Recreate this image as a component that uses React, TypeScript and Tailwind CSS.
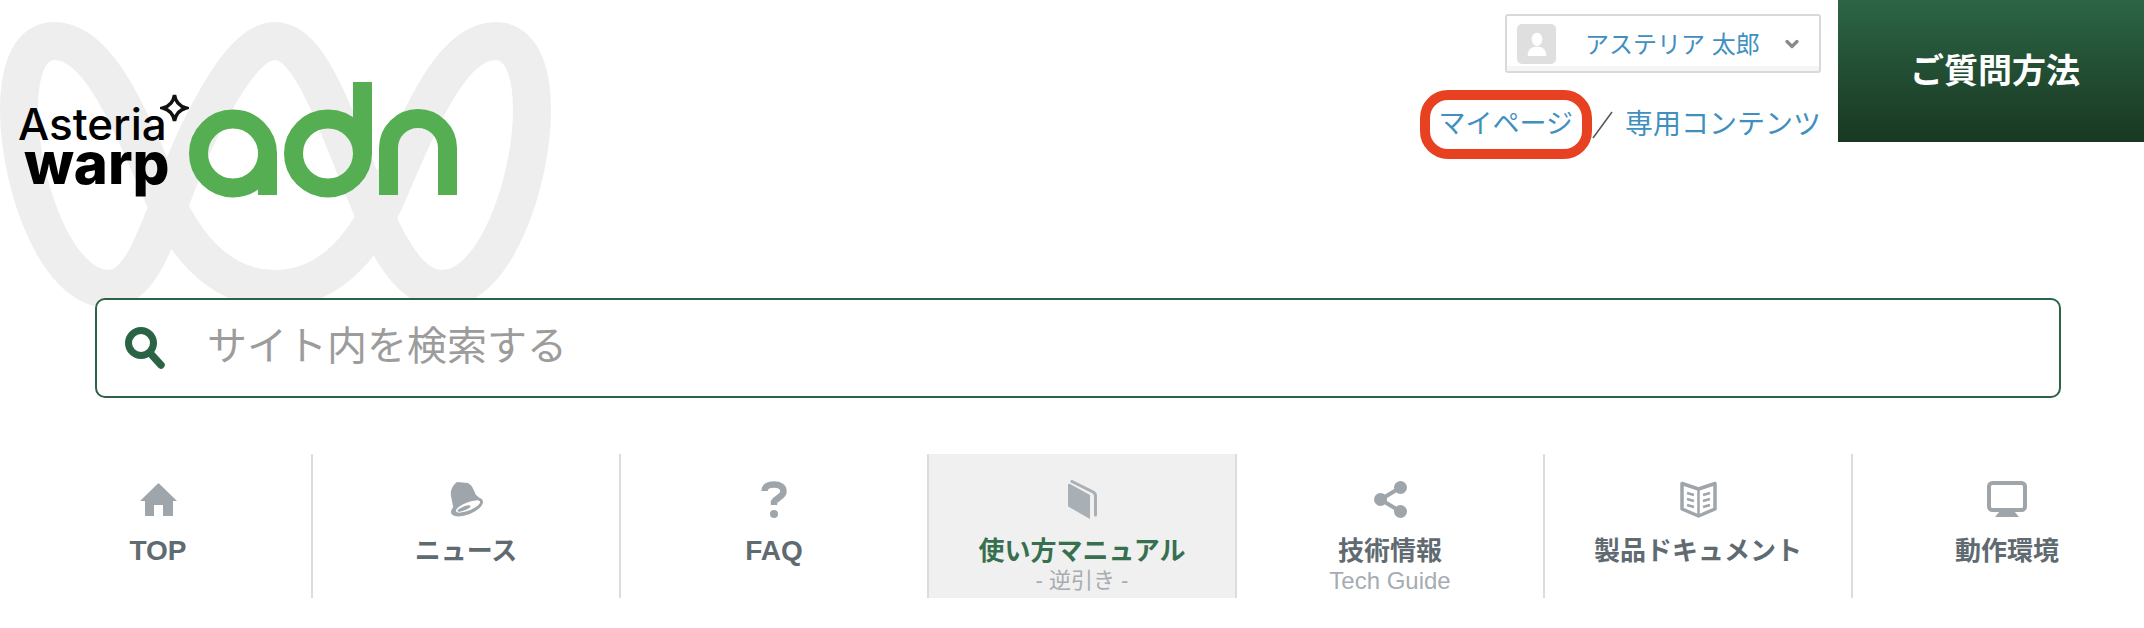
import { ChevronDown } from 'lucide-react';

const fontStack = '"Liberation Sans", "Noto Sans CJK JP", sans-serif';

function HomeIcon() {
  return (
    <svg width="37" height="33" viewBox="0 0 37 33" fill="#9ea5ab">
      <path d="M18.5 0 L37 18 L33 18 L33 33 L23 33 L23 22 L14 22 L14 33 L5 33 L5 18 L0 18 Z" />
    </svg>
  );
}

function BellIcon() {
  return (
    <svg width="33" height="36" viewBox="0 0 33 36" fill="#9ea5ab">
      <path d="M7 1 L18 2 C23 5 24 10 26 14 L32 19 L4 31 C3 25 2 20 1 15 C0 9 3 4 7 1 Z" />
      <ellipse cx="17" cy="26" rx="17" ry="7.5" transform="rotate(-22 17 26)" />
      <ellipse cx="18" cy="25.5" rx="13" ry="4" transform="rotate(-22 18 25.5)" fill="#fff" />
      <ellipse cx="14" cy="27.5" rx="7" ry="2" transform="rotate(-22 14 27.5)" />
    </svg>
  );
}

function QuestionIcon() {
  return (
    <svg width="26" height="37" viewBox="0 0 26 37" fill="none">
      <path d="M3.5 10 C3.5 5.5 7.5 3.5 13 3.5 C19 3.5 22.5 6 22.5 10.5 C22.5 16 15 16.5 13 21 L13 24" stroke="#9ea5ab" strokeWidth="6.5" />
      <circle cx="13" cy="33" r="4" fill="#9ea5ab" />
    </svg>
  );
}

function BookIcon() {
  return (
    <svg width="29" height="39" viewBox="0 0 29 39" fill="#a8afb5">
      <path d="M0 5 Q0 3 2 4 L22 15 V39 L1 27 Q0 26.5 0 25 Z" />
      <path d="M4 1.5 L25 12 Q27.5 13.5 27.5 16 V35" fill="none" stroke="#a8afb5" strokeWidth="3" strokeLinecap="round" />
    </svg>
  );
}

function ShareIcon() {
  return (
    <svg width="33" height="37" viewBox="0 0 33 37" fill="#9ea5ab">
      <circle cx="26.5" cy="6.5" r="6.5" />
      <circle cx="6.5" cy="18.5" r="6.5" />
      <circle cx="26.5" cy="30.5" r="6.5" />
      <path d="M26.5 6.5 L6.5 18.5 L26.5 30.5" stroke="#9ea5ab" strokeWidth="4" fill="none" />
    </svg>
  );
}

function OpenBookIcon() {
  return (
    <svg width="37" height="37" viewBox="0 0 37 37" fill="none" stroke="#9ea5ab">
      <path d="M2 2.5 L18.5 8 L35 2.5 V28 L18.5 35 L2 28 Z" strokeWidth="3.5" strokeLinejoin="round" />
      <path d="M18.5 8 V35" strokeWidth="2.5" />
      <path d="M7 12 L14 14 M7 18 L14 20 M7 24 L14 26 M30 12 L23 14 M30 18 L23 20 M30 24 L23 26" strokeWidth="2.5" />
    </svg>
  );
}

function MonitorIcon() {
  return (
    <svg width="40" height="36" viewBox="0 0 40 36" fill="none">
      <rect x="2" y="2" width="36" height="27" rx="3.5" stroke="#9ea5ab" strokeWidth="4" />
      <path d="M8 36 L13 30 H27 L32 36 Z" fill="#9ea5ab" />
    </svg>
  );
}

const navItems = [
  { label: 'TOP', icon: <HomeIcon />, latin: true },
  { label: 'ニュース', icon: <BellIcon /> },
  { label: 'FAQ', icon: <QuestionIcon />, latin: true },
  { label: '使い方マニュアル', sub: '- 逆引き -', subSize: 'text-[22px]', icon: <BookIcon />, active: true },
  { label: '技術情報', sub: 'Tech Guide', subSize: 'text-[24px]', icon: <ShareIcon /> },
  { label: '製品ドキュメント', icon: <OpenBookIcon /> },
  { label: '動作環境', icon: <MonitorIcon /> },
];

export default function App() {
  return (
    <div className="relative h-[628px] w-[2144px] overflow-hidden bg-white" style={{ fontFamily: fontStack }}>
      {/* watermark ribbon behind the logo */}
      <svg className="absolute left-0 top-0" width="560" height="320" viewBox="0 0 560 320" fill="none" stroke="#eeeeee" strokeWidth="38">
        <path d="M109 289 C55 289 19 180 19 110 C19 65 32 41 54 41 C100 41 130 120 165 200 C195 265 235 289 275 289 C315 289 355 265 385 200 C420 120 450 41 496 41 C518 41 532 65 532 110 C532 180 496 289 442 289 C395 289 370 200 340 130 C320 80 300 41 275 41 C250 41 225 80 200 130 C165 200 150 289 109 289 Z" />
      </svg>

      <div className="relative flex h-[218px] items-start justify-between">
        {/* logo */}
        <div className="ml-[18px] mt-[82px] flex items-start">
          <div className="relative mt-[20px] w-[171px]" style={{ fontFamily: '"Inter", sans-serif' }}>
            <div className="text-[44px] leading-[44px] font-medium text-black">Asteria</div>
            <div className="-mt-[12px] ml-[6px] text-[58px] leading-[58px] font-extrabold text-black">warp</div>
            <svg className="absolute left-[142px] top-[-10px]" width="29" height="32" viewBox="0 0 29 32" fill="none" stroke="#111" strokeWidth="3.5">
              <path d="M14.5 3 C15.5 10 19 14 26 16 C19 18 15.5 22 14.5 29 C13.5 22 10 18 3 16 C10 14 13.5 10 14.5 3 Z" />
            </svg>
          </div>
          <svg width="268" height="116" viewBox="0 0 268 116" fill="none" stroke="#55ae52" strokeWidth="19">
            <circle cx="44" cy="71.5" r="34.5" />
            <path d="M78.5 70 V113" />
            <circle cx="139" cy="71.5" r="34.5" />
            <path d="M173.5 0 V72" />
            <path d="M199.5 113 V66 A29.5 29.5 0 0 1 258.5 66 V113" />
          </svg>
        </div>

        {/* account area */}
        <div className="flex items-start">
          <div className="mr-[17px] mt-[14px] flex flex-col items-end">
            <div className="flex h-[59px] w-[316px] items-center rounded-[3px] border-2 border-[#d9d9d9] pl-[10px] pr-[17px] text-[24px] text-[#3f8fc0] shadow-[inset_0_-5px_0_#f5f5f5]">
              <span className="flex h-[40px] w-[39px] items-center justify-center rounded-[5px] bg-[#dfdfdf]">
                <svg width="20" height="24" viewBox="0 0 14 18" fill="#fff">
                  <ellipse cx="7" cy="5.5" rx="4" ry="5" />
                  <path d="M0 18 C0 12 4 11 7 11 C10 11 14 12 14 18 Z" />
                </svg>
              </span>
              <span className="ml-[29px] flex-1 pt-[2px] whitespace-nowrap">アステリア 太郎</span>
              <ChevronDown size={20} strokeWidth={4} color="#8a8a8a" />
            </div>
            <div className="mt-[17px] flex items-center text-[28px] leading-none text-[#3f8fc0]">
              <span className="rounded-[28px] border-[10px] border-[#e84122] px-[9px] py-[11px] text-[27px] whitespace-nowrap">マイページ</span>
              <svg width="21" height="28" viewBox="0 0 21 28">
                <path d="M20 1 L1 27" stroke="#555" strokeWidth="1.5" />
              </svg>
              <span className="ml-[12px] whitespace-nowrap">専用コンテンツ</span>
            </div>
          </div>
          <a className="flex h-[142px] w-[306px] items-center justify-center bg-gradient-to-b from-[#2c6546] to-[#193821] pl-[8px] text-[34px] font-bold text-white">
            ご質問方法
          </a>
        </div>
      </div>

      {/* search */}
      <div className="relative mt-[80px] px-[95px]">
        <div className="flex h-[100px] w-[1966px] items-center rounded-[10px] border-2 border-[#2a6345] bg-white pl-[28px]">
          <svg width="40" height="42" viewBox="0 0 40 42" fill="none">
            <circle cx="16" cy="16" r="12.5" stroke="#2a6345" strokeWidth="7" />
            <path d="M25 26 L36 38" stroke="#2a6345" strokeWidth="7.5" strokeLinecap="round" />
          </svg>
          <span className="ml-[42px] pb-[4px] text-[40px] text-[#9c9c9c]">サイト内を検索する</span>
        </div>
      </div>

      {/* nav */}
      <nav className="relative mt-[56px] flex h-[144px] pl-[5px]">
        {navItems.map((item, i) => (
          <div
            key={item.label}
            className={`flex w-[308px] shrink-0 flex-col items-center pt-[26px] ${i < 6 ? 'border-r-2 border-[#dcdcdc]' : ''} ${item.active ? 'bg-[#f0f0f0]' : ''}`}
          >
            <div className="flex h-[38px] items-center">{item.icon}</div>
            <div
              className={`mt-[15px] leading-[36px] font-bold whitespace-nowrap ${item.latin ? 'text-[28px]' : 'text-[26px]'} ${item.active ? 'text-[#36704f]' : 'text-[#5f6a71]'}`}
            >
              {item.label}
            </div>
            {item.sub && <div className={`${item.subSize} leading-[24px] text-[#a6acb1] whitespace-nowrap`}>{item.sub}</div>}
          </div>
        ))}
      </nav>
    </div>
  );
}
